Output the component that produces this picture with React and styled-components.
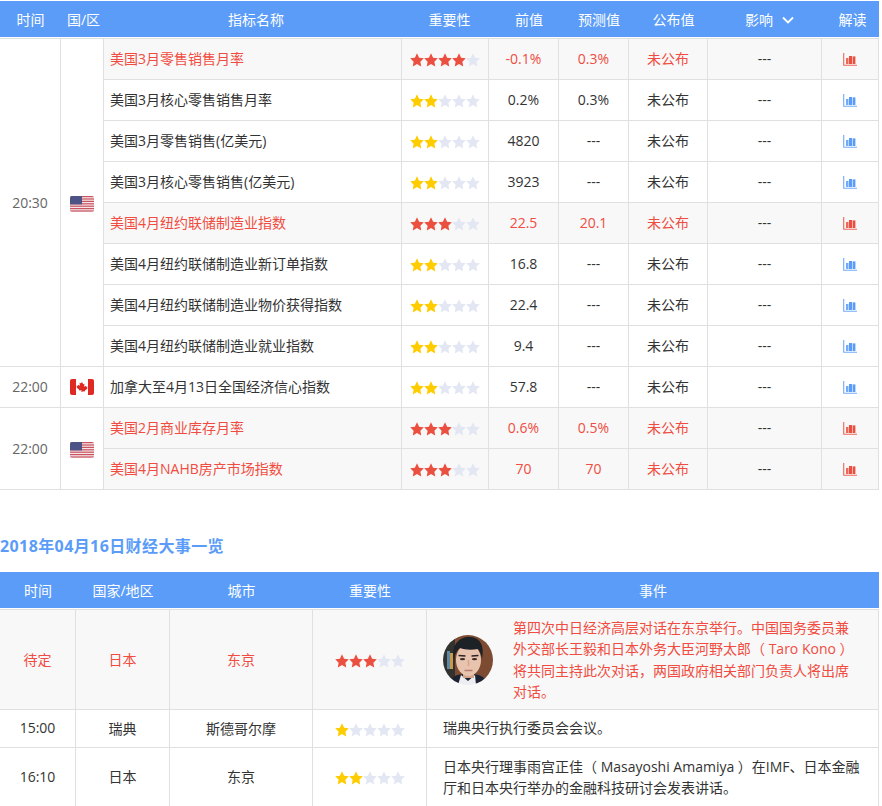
import styled, { createGlobalStyle } from 'styled-components'

const GlobalStyle = createGlobalStyle`
  html, body {
    margin: 0;
    padding: 0;
    background: #fff;
    overflow: hidden;
    font-family: "Open Sans", "Noto Sans CJK SC", sans-serif;
    font-size: 14px;
    color: #333;
  }
`

const Page = styled.div`
  width: 879px;
  padding-top: 1px;
`

const Table = styled.table`
  width: 879px;
  table-layout: fixed;
  border-collapse: separate;
  border-spacing: 0;

  tbody tr:first-child td {
    border-top: 1px solid #e0e0e0;
  }
`

const Th = styled.th`
  height: 36px;
  padding: 0 0 0 ${p => p.$shift || 0}px;
  background: #5a9cf8;
  background-clip: padding-box;
  color: #fff;
  font-size: 14px;
  font-weight: 400;
  text-align: center;
  border-bottom: 1px solid #fff;
`

const Td = styled.td`
  height: ${p => (p.$h || 40) - 2}px;
  padding: 0 0 ${p => p.$tall ? 0 : 2}px ${p => p.$left || 0}px;
  font-size: 14px;
  text-align: ${p => p.$left ? 'left' : 'center'};
  color: ${p => p.$hot ? '#f04c41' : p.$muted ? '#666' : '#333'};
  background: ${p => p.$hot ? '#f8f8f8' : '#fff'};
  border-right: 1px solid #e0e0e0;
  border-bottom: 1px solid #e0e0e0;
`

const DashTd = styled(Td)`
  color: #333;
`

const Stars = styled.div`
  display: flex;
  justify-content: ${p => p.$center ? 'center' : 'flex-start'};
  padding-left: ${p => p.$center ? 0 : 8}px;
  margin-top: 4px;
`

const HeadChevron = styled.svg`
  width: 14px;
  height: 14px;
  margin-left: 8px;
  vertical-align: -2px;
`

const ChartIcon = styled.svg`
  display: block;
  width: 14px;
  height: 13px;
  margin: 2px auto 0;
`

const FlagBox = styled.svg`
  display: block;
  width: 24px;
  height: 16px;
  margin: 2px auto 0;
`

const SectionTitle = styled.h2`
  margin: 45px 0 15px;
  height: 22px;
  line-height: 22px;
  color: #5a9cf8;
  font-size: 16px;
  font-weight: 700;
  letter-spacing: 0.4px;
`

const EventBox = styled.div`
  display: flex;
  align-items: center;
  gap: 20px;
  padding: ${p => p.$pad}px 18px 0 0;
`

const EventText = styled.div`
  flex: 1;
  line-height: 21.5px;
`

const Portrait = styled.svg`
  flex: none;
  width: 50px;
  height: 50px;
`

const StarRow = ({ n, hot, center }) => (
  <Stars $center={center}>
    {[0, 1, 2, 3, 4].map(i => (
      <svg key={i} width="14" height="14" viewBox="0 0 24 24">
        <polygon
          points="12,0.5 15.6,8 23.6,9 17.8,14.8 19.2,23 12,19 4.8,23 6.2,14.8 0.4,9 8.4,8"
          fill={i < n ? (hot ? '#ea4f3f' : '#ffcc00') : '#e3e7f3'}
        />
      </svg>
    ))}
  </Stars>
)

const Chart = ({ hot }) => {
  const c = hot ? '#ea4f3f' : '#5a9cf8'
  return (
    <ChartIcon viewBox="0 0 14 13">
      <path d="M0.7 0v12.3H14" fill="none" stroke={c} strokeWidth="1.1" strokeOpacity="0.85" />
      <rect x="3" y="5" width="2.5" height="6" fill={c} fillOpacity="0.85" />
      <rect x="6" y="3" width="3" height="8" fill={c} />
      <rect x="9.6" y="3.4" width="2.8" height="7.6" fill={c} />
    </ChartIcon>
  )
}

const UsFlag = () => (
  <FlagBox viewBox="0 0 24 16">
    <clipPath id="usclip"><rect width="24" height="16" rx="2" /></clipPath>
    <g clipPath="url(#usclip)">
      <rect width="24" height="16" fill="#f4e6e8" />
      {[0, 2.4, 4.8, 7.2, 9.6, 12, 14.4].map(y => (
        <rect key={y} y={y} width="24" height="1.2" fill="#c9535f" />
      ))}
      <rect width="12" height="8.4" fill="#4d5384" />
    </g>
  </FlagBox>
)

const CaFlag = () => (
  <FlagBox viewBox="0 0 24 16">
    <clipPath id="caclip"><rect width="24" height="16" rx="2" /></clipPath>
    <g clipPath="url(#caclip)">
      <rect width="24" height="16" fill="#fff" />
      <rect width="6" height="16" fill="#de2a22" />
      <rect x="18" width="6" height="16" fill="#de2a22" />
      <path d="M12 3l1.2 2.3 1.3-.6-.5 3 1.6-1 .4 1.1 1.5-.2-.5 1.6.6.4-2.6 2-.2 1-2.3-.3V13h-1v-1.7l-2.3.3-.2-1-2.6-2 .6-.4-.5-1.6 1.5.2.4-1.1 1.6 1-.5-3 1.3.6z" fill="#de2a22" />
    </g>
  </FlagBox>
)

const Face = () => (
  <Portrait viewBox="0 0 50 50">
    <defs>
      <filter id="soft"><feGaussianBlur stdDeviation="0.6" /></filter>
    </defs>
    <clipPath id="faceclip"><circle cx="25" cy="25" r="25" /></clipPath>
    <g clipPath="url(#faceclip)">
      <g filter="url(#soft)">
        <rect width="50" height="50" fill="#7c4c32" />
        <rect width="12" height="50" fill="#33302e" />
        <rect x="4" y="16" width="3" height="18" fill="#5d88a8" />
        <rect x="7" y="18" width="3" height="16" fill="#c69a4a" />
        <path d="M6 50c1-8 6-11 19-11s18 3 19 11z" fill="#1d2430" />
        <path d="M15 50l3-10 7 6 7-6 1 10z" fill="#eceef2" />
        <rect x="20" y="34" width="11" height="9" fill="#d2a48c" />
        <ellipse cx="25.5" cy="25" rx="12.5" ry="16" fill="#e8c4ae" />
        <path d="M11 24C8 10 16 2 26 2s16 7 13 22c-1-5-2-8-4-10-6 1-13 1-18-1-3 2-5 6-6 11z" fill="#1c2025" />
        <path d="M15.5 20.5l7 .5M28.5 21l7-.5" stroke="#2e2422" strokeWidth="1.5" />
        <ellipse cx="19.5" cy="24.2" rx="2.6" ry="1.1" fill="#3a2c2a" />
        <ellipse cx="31.5" cy="24.2" rx="2.6" ry="1.1" fill="#3a2c2a" />
        <path d="M25.5 25v6" stroke="#d6a890" strokeWidth="1.6" />
        <path d="M21.5 35.5h8" stroke="#b97c70" strokeWidth="1.5" />
      </g>
    </g>
  </Portrait>
)

const indicators = [
  { name: '美国3月零售销售月率', stars: 4, hot: true, prev: '-0.1%', fc: '0.3%', time: '20:30', flag: <UsFlag />, span: 8 },
  { name: '美国3月核心零售销售月率', stars: 2, prev: '0.2%', fc: '0.3%' },
  { name: '美国3月零售销售(亿美元)', stars: 2, prev: '4820', fc: '---' },
  { name: '美国3月核心零售销售(亿美元)', stars: 2, prev: '3923', fc: '---' },
  { name: '美国4月纽约联储制造业指数', stars: 3, hot: true, prev: '22.5', fc: '20.1' },
  { name: '美国4月纽约联储制造业新订单指数', stars: 2, prev: '16.8', fc: '---' },
  { name: '美国4月纽约联储制造业物价获得指数', stars: 2, prev: '22.4', fc: '---' },
  { name: '美国4月纽约联储制造业就业指数', stars: 2, prev: '9.4', fc: '---' },
  { name: '加拿大至4月13日全国经济信心指数', stars: 2, prev: '57.8', fc: '---', time: '22:00', flag: <CaFlag />, span: 1 },
  { name: '美国2月商业库存月率', stars: 3, hot: true, prev: '0.6%', fc: '0.5%', time: '22:00', flag: <UsFlag />, span: 2 },
  { name: '美国4月NAHB房产市场指数', stars: 3, hot: true, prev: '70', fc: '70' },
]

const events = [
  { time: '待定', country: '日本', city: '东京', stars: 3, hot: true, h: 99, photo: true, pad: 2,
    text: '第四次中日经济高层对话在东京举行。中国国务委员兼外交部长王毅和日本外务大臣河野太郎（ Taro Kono ）将共同主持此次对话，两国政府相关部门负责人将出席对话。' },
  { time: '15:00', country: '瑞典', city: '斯德哥尔摩', stars: 1, h: 37, pad: 0, text: '瑞典央行执行委员会会议。' },
  { time: '16:10', country: '日本', city: '东京', stars: 2, h: 58, pad: 2,
    text: '日本央行理事雨宫正佳（ Masayoshi Amamiya ）在IMF、日本金融厅和日本央行举办的金融科技研讨会发表讲话。' },
]

const App = () => (
  <Page>
    <GlobalStyle />
    <Table>
      <colgroup>
        {[61, 43, 298, 87, 70, 70, 79, 114, 57].map((w, i) => <col key={i} width={w} />)}
      </colgroup>
      <thead>
        <tr>
          <Th>时间</Th>
          <Th $shift={2}>国/区</Th>
          <Th $shift={6}>指标名称</Th>
          <Th $shift={8}>重要性</Th>
          <Th $shift={10}>前值</Th>
          <Th $shift={10}>预测值</Th>
          <Th $shift={10}>公布值</Th>
          <Th $shift={10}>
            影响
            <HeadChevron viewBox="0 0 14 14">
              <path d="M2 4.5l5 5 5-5" fill="none" stroke="#fff" strokeWidth="1.8" />
            </HeadChevron>
          </Th>
          <Th $shift={4}>解读</Th>
        </tr>
      </thead>
      <tbody>
        {indicators.map(row => (
          <tr key={row.name}>
            {row.span && <Td rowSpan={row.span} $tall={row.span > 1} $muted>{row.time}</Td>}
            {row.span && <Td rowSpan={row.span} $tall={row.span > 1}>{row.flag}</Td>}
            <Td $left={6} $hot={row.hot}>{row.name}</Td>
            <Td $hot={row.hot}><StarRow n={row.stars} hot={row.hot} /></Td>
            <Td $hot={row.hot}>{row.prev}</Td>
            <Td $hot={row.hot}>{row.fc}</Td>
            <Td $hot={row.hot}>未公布</Td>
            <DashTd $hot={row.hot}>---</DashTd>
            <Td $hot={row.hot}><Chart hot={row.hot} /></Td>
          </tr>
        ))}
      </tbody>
    </Table>

    <SectionTitle>2018年04月16日财经大事一览</SectionTitle>

    <Table>
      <colgroup>
        {[76, 94, 143, 114, 452].map((w, i) => <col key={i} width={w} />)}
      </colgroup>
      <thead>
        <tr>
          <Th>时间</Th>
          <Th>国家/地区</Th>
          <Th>城市</Th>
          <Th>重要性</Th>
          <Th>事件</Th>
        </tr>
      </thead>
      <tbody>
        {events.map(row => (
          <tr key={row.time}>
            <Td $h={row.h} $hot={row.hot}>{row.time}</Td>
            <Td $h={row.h} $hot={row.hot}>{row.country}</Td>
            <Td $h={row.h} $hot={row.hot}>{row.city}</Td>
            <Td $h={row.h} $hot={row.hot}><StarRow n={row.stars} hot={row.hot} center /></Td>
            <Td $h={row.h} $left={16} $hot={row.hot}>
              <EventBox $pad={row.pad}>
                {row.photo && <Face />}
                <EventText>{row.text}</EventText>
              </EventBox>
            </Td>
          </tr>
        ))}
      </tbody>
    </Table>
  </Page>
)

export default App
